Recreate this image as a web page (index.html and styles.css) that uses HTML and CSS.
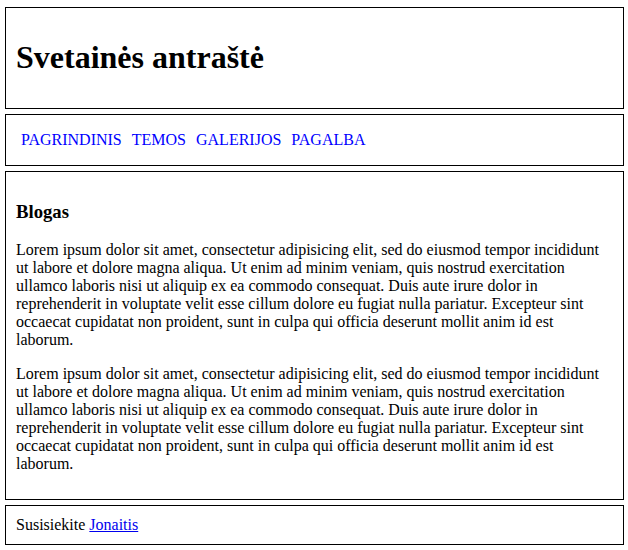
FILE: index.html
```html
<!DOCTYPE html>
<html lang="lt">
<head>
<meta charset="utf-8">
<title>Svetainė</title>
<link rel="stylesheet" href="styles.css">
</head>
<body>
<header class="box header">
  <h1>Svetainės antraštė</h1>
</header>
<nav class="box nav">
  <ul class="menu">
    <li><a href="#">PAGRINDINIS</a></li>
    <li><a href="#">TEMOS</a></li>
    <li><a href="#">GALERIJOS</a></li>
    <li><a href="#">PAGALBA</a></li>
  </ul>
</nav>
<main class="box content">
  <h3>Blogas</h3>
  <p>Lorem ipsum dolor sit amet, consectetur adipisicing elit, sed do eiusmod tempor incididunt ut labore et dolore magna aliqua. Ut enim ad minim veniam, quis nostrud exercitation ullamco laboris nisi ut aliquip ex ea commodo consequat. Duis aute irure dolor in reprehenderit in voluptate velit esse cillum dolore eu fugiat nulla pariatur. Excepteur sint occaecat cupidatat non proident, sunt in culpa qui officia deserunt mollit anim id est laborum.</p>
  <p>Lorem ipsum dolor sit amet, consectetur adipisicing elit, sed do eiusmod tempor incididunt ut labore et dolore magna aliqua. Ut enim ad minim veniam, quis nostrud exercitation ullamco laboris nisi ut aliquip ex ea commodo consequat. Duis aute irure dolor in reprehenderit in voluptate velit esse cillum dolore eu fugiat nulla pariatur. Excepteur sint occaecat cupidatat non proident, sunt in culpa qui officia deserunt mollit anim id est laborum.</p>
</main>
<footer class="box footer">
  Susisiekite <a href="#">Jonaitis</a>
</footer>
</body>
</html>
```

FILE: styles.css
```css
html, body {
  margin: 0;
  padding: 0;
  background: #fff;
}
body {
  padding: 7px 4px 0 5px;
  font-family: "Liberation Serif", "Times New Roman", serif;
  font-size: 16px;
  color: #000;
}
.box {
  display: block;
  border: 1px solid #000;
  padding: 10px;
  margin-bottom: 5px;
}
.header h1 {
  font-size: 32px;
  margin: 21.44px 0;
}
.nav {
  padding: 11px 10px;
}
.menu {
  list-style: none;
  margin: 0;
  padding: 0;
  display: flex;
}
.menu a {
  display: block;
  padding: 5px;
  color: #00f;
  text-decoration: none;
}
.content h3 {
  font-size: 18.72px;
  margin: 18.72px 0;
}
.content p {
  margin: 16px 0;
}
.footer a {
  color: #00e;
}
```
